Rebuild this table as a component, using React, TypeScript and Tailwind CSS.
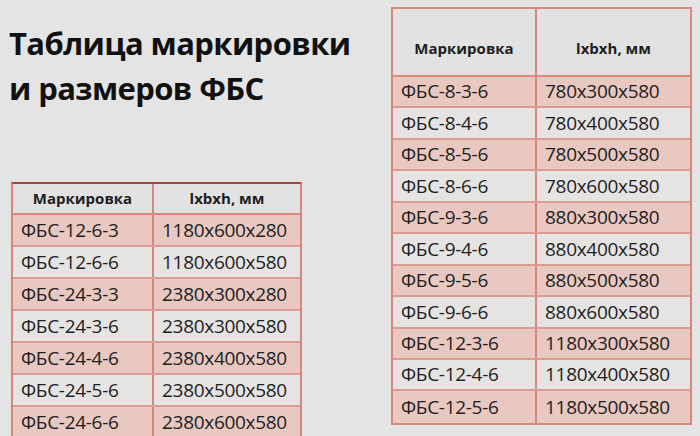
const leftRows = [
  ["ФБС-12-6-3", "1180x600x280"],
  ["ФБС-12-6-6", "1180x600x580"],
  ["ФБС-24-3-3", "2380x300x280"],
  ["ФБС-24-3-6", "2380x300x580"],
  ["ФБС-24-4-6", "2380x400x580"],
  ["ФБС-24-5-6", "2380x500x580"],
  ["ФБС-24-6-6", "2380x600x580"],
];

const rightRows = [
  ["ФБС-8-3-6", "780x300x580"],
  ["ФБС-8-4-6", "780x400x580"],
  ["ФБС-8-5-6", "780x500x580"],
  ["ФБС-8-6-6", "780x600x580"],
  ["ФБС-9-3-6", "880x300x580"],
  ["ФБС-9-4-6", "880x400x580"],
  ["ФБС-9-5-6", "880x500x580"],
  ["ФБС-9-6-6", "880x600x580"],
  ["ФБС-12-3-6", "1180x300x580"],
  ["ФБС-12-4-6", "1180x400x580"],
  ["ФБС-12-5-6", "1180x500x580"],
];

const cellFont = { fontFamily: '"Open Sans", "DejaVu Sans", sans-serif' };

const App = () => {
  return (
    <div
      className="w-[700px] h-[436px] overflow-hidden bg-[#e4e4e4] flex text-[#1e1e1e]"
      style={cellFont}
    >
      {/* left column */}
      <div className="w-[302px] shrink-0 pl-[11px] flex flex-col">
        <h1 className="mt-[21px] -ml-[2px] h-[88px] whitespace-nowrap text-[31px] leading-[45px] font-bold text-[#111] tracking-[-0.6px]">
          Таблица маркировки
          <br />
          и размеров ФБС
        </h1>
        <div className="mt-[73px] border-2 border-[#d9867b] border-t-[#a5473d] border-t-dashed">
          <div className="grid grid-cols-[141px_1fr] h-[31px] bg-[#e2e2e2] border-b-2 border-[#d9867b]">
            <div className="flex items-center justify-center border-r-2 border-[#d9867b] text-[15px] font-bold">
              Маркировка
            </div>
            <div className="flex items-center justify-center text-[15px] font-bold">
              lxbxh, мм
            </div>
          </div>
          {leftRows.map((r, i) => (
            <div
              key={r[0]}
              className={`grid grid-cols-[141px_1fr] h-[32px] border-b-2 border-[#dd9c92] ${
                i % 2 === 0 ? "bg-[#e8c8c1]" : "bg-[#e6e4e3]"
              }`}
            >
              <div className="flex items-center pl-[8px] border-r-2 border-[#d9867b] text-[19px] tracking-[-0.3px]">
                {r[0]}
              </div>
              <div className="flex items-center pl-[8px] text-[19px] tracking-[-0.3px]">
                {r[1]}
              </div>
            </div>
          ))}
        </div>
      </div>

      {/* right table */}
      <div className="ml-[89px] mt-[7px] w-[301px] shrink-0 self-start border-2 border-[#d9867b]">
        <div className="grid grid-cols-[144px_1fr] h-[68px] bg-[#e2e2e2] border-b-2 border-[#d9867b]">
          <div className="flex items-center justify-center pt-[12px] border-r-2 border-[#d9867b] text-[15px] font-bold">
            Маркировка
          </div>
          <div className="flex items-center justify-center pt-[12px] text-[15px] font-bold">
            lxbxh, мм
          </div>
        </div>
        {rightRows.map((r, i) => (
          <div
            key={r[0]}
            className={`grid grid-cols-[144px_1fr] h-[31.45px] border-b-2 last:border-b-0 border-[#dd9c92] ${
              i % 2 === 0 ? "bg-[#e8c8c1]" : "bg-[#e6e4e3]"
            }`}
          >
            <div className="flex items-center pl-[8px] border-r-2 border-[#d9867b] text-[19px] tracking-[-0.3px]">
              {r[0]}
            </div>
            <div className="flex items-center pl-[8px] text-[19px] tracking-[-0.3px]">
              {r[1]}
            </div>
          </div>
        ))}
      </div>
    </div>
  );
};

export default App;
